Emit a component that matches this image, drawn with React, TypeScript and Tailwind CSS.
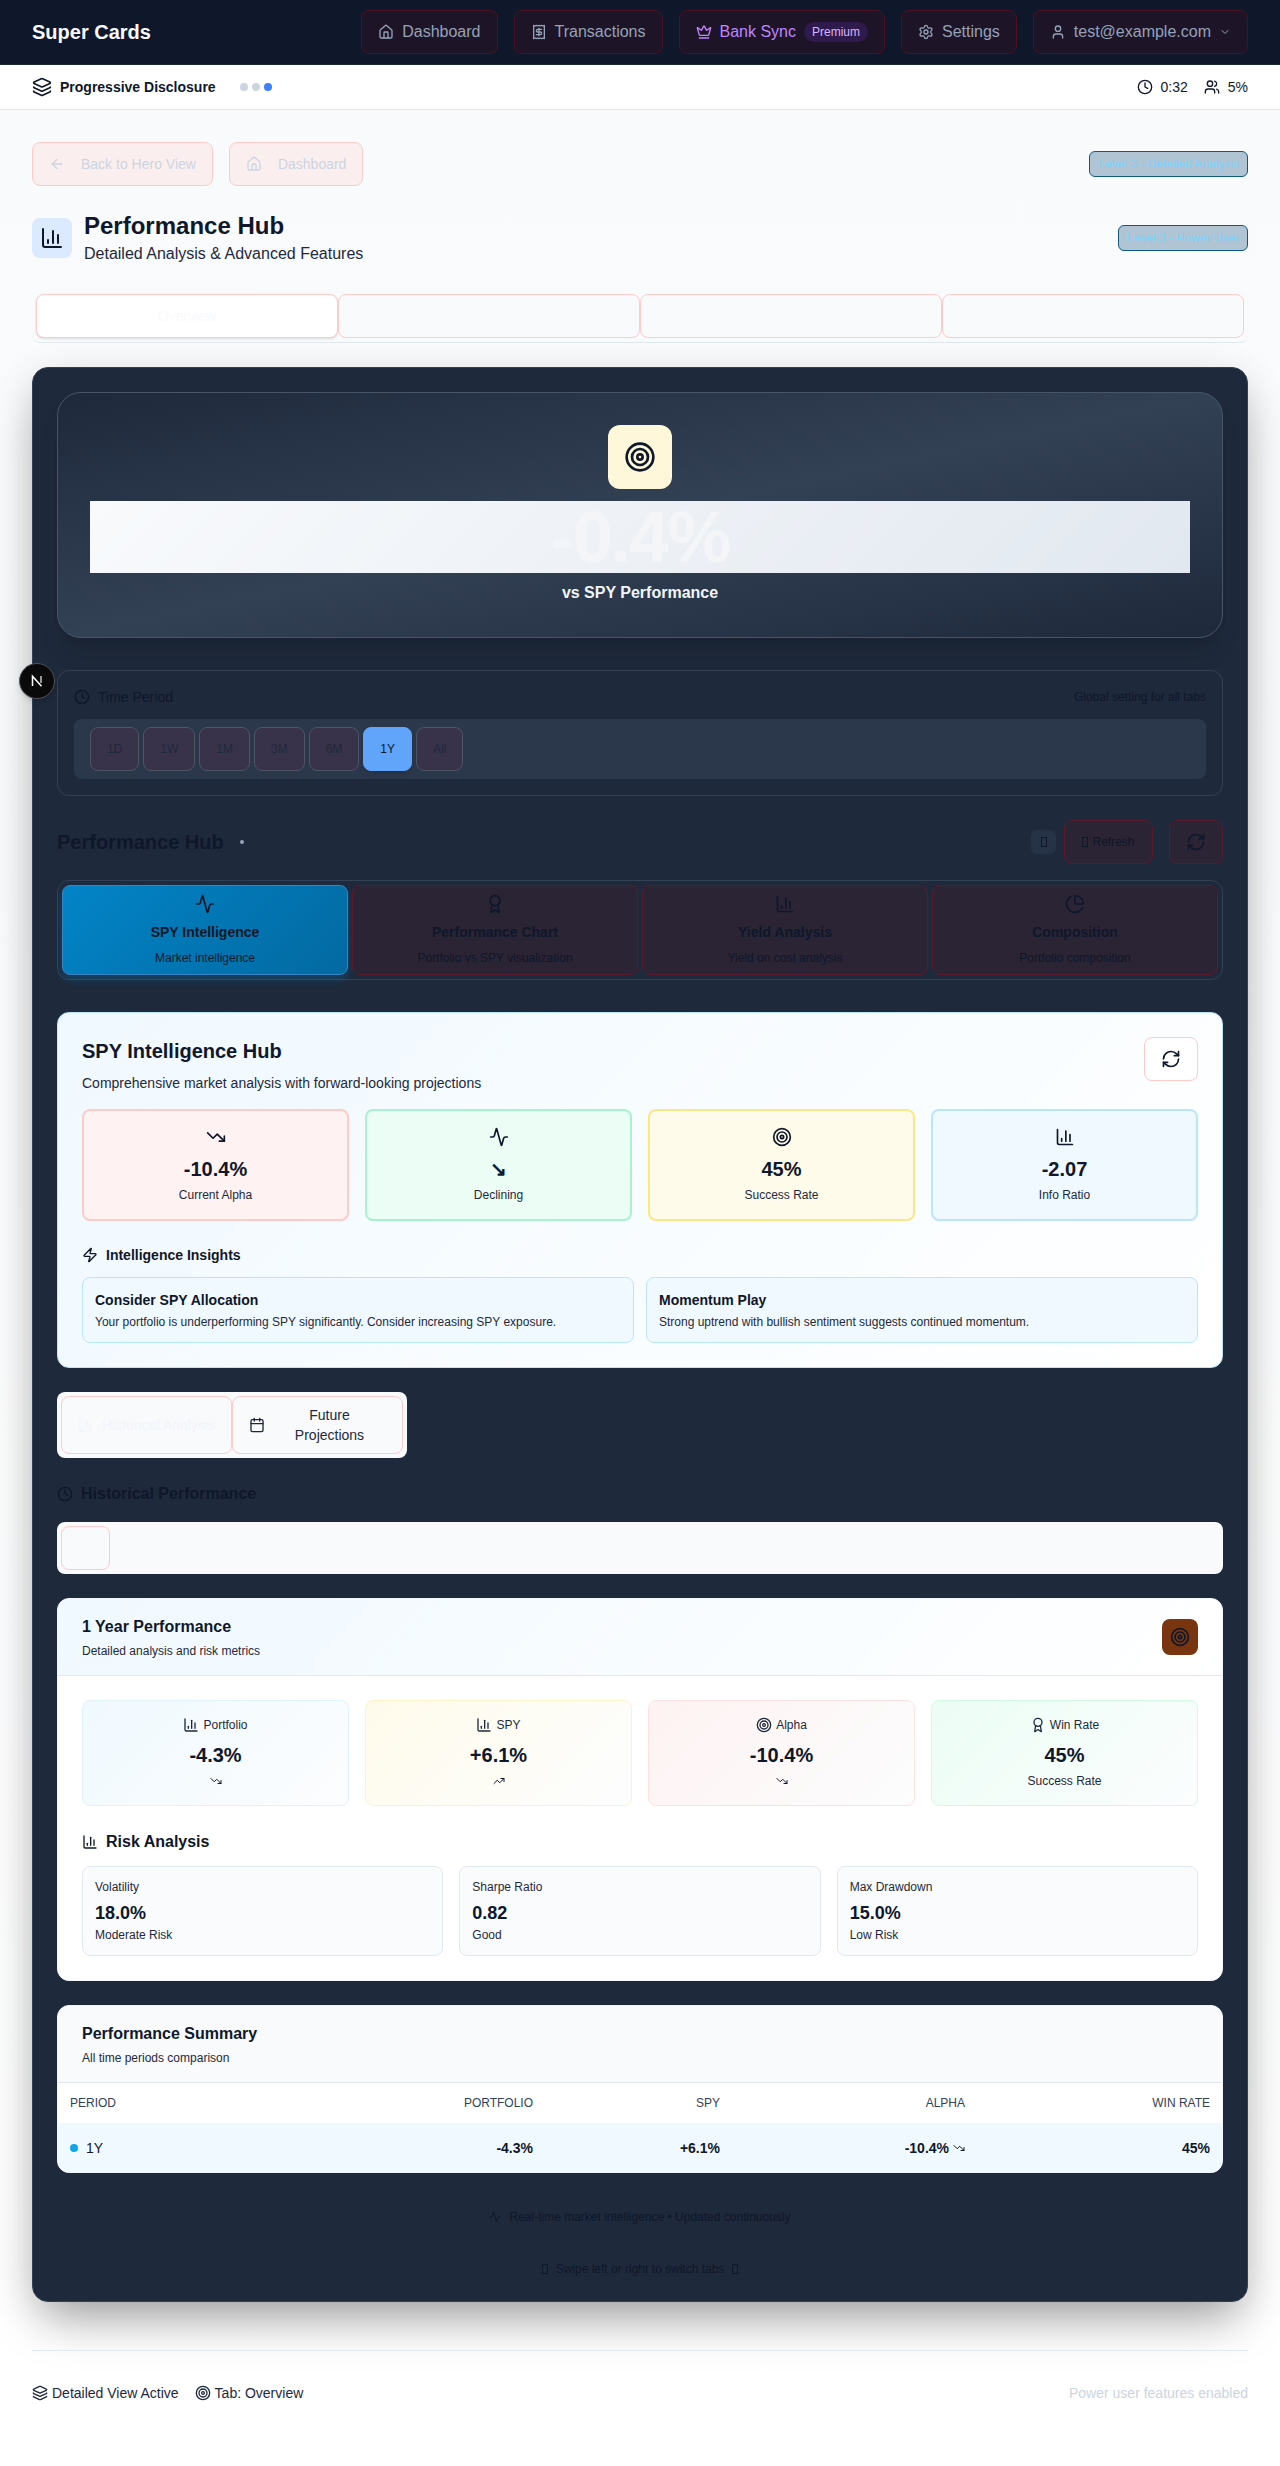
import React from "react";
import {
  Activity, ArrowLeft, Award, Calendar, ChartColumn, ChartPie, ChevronDown, Clock, Crown, House,
  Layers, Receipt, RefreshCw, Settings, Target, TrendingDown, TrendingUp, User, Users, Zap,
} from "lucide-react";

const navItems = [
  { label: "Dashboard", Icon: House },
  { label: "Transactions", Icon: Receipt },
];

function Tofu() {
  return <span className="inline-block w-[6px] h-[10px] border border-current" />;
}

function Nav() {
  return (
    <header className="h-[65px] bg-[#0f172a] border-b border-[#1e293b] px-8 flex items-center justify-between">
      <span className="text-xl font-bold text-[#f8fafc]">Super Cards</span>
      <nav className="flex items-center gap-4 text-base text-[#94a3b8]">
        {navItems.map(({ label, Icon }) => (
          <a key={label} className="h-11 px-4 flex items-center gap-2 rounded-lg border border-[#4c1023] bg-[#1e1427]">
            <Icon className="w-4 h-4" />
            {label}
          </a>
        ))}
        <a className="h-11 px-4 flex items-center gap-2 rounded-lg border border-[#4c1023] bg-[#1e1427] text-[#c084fc]">
          <Crown className="w-4 h-4" />
          Bank Sync
          <span className="h-5 px-2 flex items-center rounded-full bg-[#2e1a4d] text-xs text-[#d8b4fe]">Premium</span>
        </a>
        <a className="h-11 px-4 flex items-center gap-2 rounded-lg border border-[#4c1023] bg-[#1e1427]">
          <Settings className="w-4 h-4" />
          Settings
        </a>
        <a className="h-11 px-4 flex items-center gap-2 rounded-lg border border-[#4c1023] bg-[#1e1427]">
          <User className="w-4 h-4" />
          test@example.com
          <ChevronDown className="w-3 h-3" />
        </a>
      </nav>
    </header>
  );
}

function SubBar() {
  return (
    <div className="h-[45px] bg-white border-b border-[#e2e8f0] px-8 flex items-center justify-between text-[#0f172a]">
      <div className="flex items-center">
        <Layers className="w-5 h-5" />
        <span className="ml-2 text-sm font-semibold">Progressive Disclosure</span>
        <div className="ml-6 flex gap-1">
          <span className="w-2 h-2 rounded-full bg-[#cbd5e1]" />
          <span className="w-2 h-2 rounded-full bg-[#cbd5e1]" />
          <span className="w-2 h-2 rounded-full bg-[#3b82f6]" />
        </div>
      </div>
      <div className="flex items-center text-sm">
        <Clock className="w-4 h-4" />
        <span className="ml-2">0:32</span>
        <Users className="w-4 h-4 ml-4" />
        <span className="ml-2">5%</span>
      </div>
    </div>
  );
}

function Badge({ children }: { children: React.ReactNode }) {
  return (
    <span className="h-[26px] px-2 flex items-center rounded-md border border-[#0c5a85] bg-[#b0c4d4] text-xs text-[#7dd3fc]">
      {children}
    </span>
  );
}

function TopSection() {
  return (
    <>
      <div className="flex items-center justify-between">
        <div className="flex gap-4 text-sm text-[#cbd5e1]">
          <a className="h-11 px-4 flex items-center gap-4 rounded-lg border border-[#fecaca] bg-[#fbeeee]">
            <ArrowLeft className="w-4 h-4" />
            Back to Hero View
          </a>
          <a className="h-11 px-4 flex items-center gap-4 rounded-lg border border-[#fecaca] bg-[#fbeeee]">
            <House className="w-4 h-4" />
            Dashboard
          </a>
        </div>
        <Badge>Level 3 - Detailed Analysis</Badge>
      </div>
      <div className="mt-6 flex items-center justify-between">
        <div className="flex items-center gap-3">
          <div className="w-10 h-10 rounded-lg bg-[#dbeafe] flex items-center justify-center text-[#0f172a]">
            <ChartColumn className="w-6 h-6" />
          </div>
          <div>
            <h1 className="text-2xl font-bold text-[#0f172a]">Performance Hub</h1>
            <p className="text-base text-[#1e293b]">Detailed Analysis &amp; Advanced Features</p>
          </div>
        </div>
        <Badge>Level 3 - Power User</Badge>
      </div>
      <div className="mt-6 p-1 grid grid-cols-4 rounded-lg border-b border-[#e2e8f0] bg-[#f8fafc]">
        <button className="h-11 rounded-lg border border-[#fecaca] bg-white shadow-sm text-sm text-[#f8fafc]">Overview</button>
        <button className="h-11 rounded-lg border border-[#fecaca] bg-[#f8fafc] text-sm text-[#f8fafc]">Performance</button>
        <button className="h-11 rounded-lg border border-[#fecaca] bg-[#f8fafc] text-sm text-[#f8fafc]">Composition</button>
        <button className="h-11 rounded-lg border border-[#fecaca] bg-[#f8fafc] text-sm text-[#f8fafc]">Analysis</button>
      </div>
    </>
  );
}

function Hero() {
  return (
    <section className="rounded-3xl border border-[#475569] bg-gradient-to-br from-[#1e293b] via-[#334155] to-[#1e293b] shadow-xl p-8 flex flex-col items-center">
      <div className="w-16 h-16 rounded-xl bg-[#fef7d9] flex items-center justify-center text-[#0f172a]">
        <Target className="w-8 h-8" />
      </div>
      <div className="mt-3 w-full h-[72px] bg-[linear-gradient(135deg,#f8fafc,#e2e8f0)] text-center text-7xl font-bold tracking-tight text-[#f3f5f9]">
        -0.4%
      </div>
      <p className="mt-2 text-base font-semibold text-[#f1f5f9]">vs SPY Performance</p>
    </section>
  );
}

function TimePeriod() {
  const items = ["1D", "1W", "1M", "3M", "6M", "1Y", "All"];
  return (
    <section className="mt-8 rounded-xl border border-[#334155] bg-[#1e293b] p-4">
      <div className="h-5 flex items-center justify-between text-[#0f172a]">
        <span className="flex items-center gap-2 text-sm">
          <Clock className="w-4 h-4" />
          Time Period
        </span>
        <span className="text-xs">Global setting for all tabs</span>
      </div>
      <div className="mt-3 px-4 py-2 rounded-lg bg-[#2b384c] flex gap-1">
        {items.map((t) =>
          t === "1Y" ? (
            <button key={t} className="h-11 px-4 rounded-lg border border-[#60a5fa] bg-[#60a5fa] text-xs text-[#0f172a] shadow-md">{t}</button>
          ) : (
            <button key={t} className="h-11 px-4 rounded-lg border border-[#4b5563] bg-[#38324a] text-xs text-[#1e293b]">{t}</button>
          )
        )}
      </div>
    </section>
  );
}

function HubHeader() {
  return (
    <div className="mt-6 h-11 flex items-center justify-between text-[#0f172a]">
      <div className="flex items-center">
        <h2 className="text-xl font-bold">Performance Hub</h2>
        <span className="ml-4 w-1 h-1 rounded-full bg-[#94a3b8]" />
      </div>
      <div className="flex items-center">
        <span className="w-[25px] h-6 rounded-md bg-[#263346] flex items-center justify-center"><Tofu /></span>
        <button className="ml-2 h-11 w-[89px] rounded-lg border border-[#5a1a2e] bg-[#2a2435] text-xs flex items-center justify-center gap-1">
          <Tofu />
          Refresh
        </button>
        <button className="ml-4 h-11 w-[54px] rounded-lg border border-[#5a1a2e] bg-[#2a2435] flex items-center justify-center">
          <RefreshCw className="w-5 h-5" />
        </button>
      </div>
    </div>
  );
}

function HubTabs() {
  const tabs = [
    { title: "SPY Intelligence", sub: "Market intelligence", Icon: Activity, active: true },
    { title: "Performance Chart", sub: "Portfolio vs SPY visualization", Icon: Award },
    { title: "Yield Analysis", sub: "Yield on cost analysis", Icon: ChartColumn },
    { title: "Composition", sub: "Portfolio composition", Icon: ChartPie },
  ];
  return (
    <div className="mt-4 p-1 rounded-xl border border-[#334155] grid grid-cols-4 gap-1 text-[#0f172a]">
      {tabs.map(({ title, sub, Icon, active }) =>
        active ? (
          <button key={title} className="p-2 rounded-lg border border-[#3b82c4] bg-[linear-gradient(135deg,#0284c7,#0369a1)] shadow-[0_4px_8px_rgba(2,132,199,0.35)] flex flex-col items-center">
            <Icon className="w-5 h-5" />
            <span className="mt-2 text-sm font-semibold">{title}</span>
            <span className="mt-2 text-xs">{sub}</span>
          </button>
        ) : (
          <button key={title} className="p-2 rounded-lg border border-[#5a1a2e] bg-[#2a2435] flex flex-col items-center">
            <Icon className="w-5 h-5" />
            <span className="mt-2 text-sm font-semibold">{title}</span>
            <span className="mt-2 text-xs">{sub}</span>
          </button>
        )
      )}
    </div>
  );
}

function SpyCard() {
  return (
    <section className="mt-8 rounded-xl border border-[#bae6fd] bg-[linear-gradient(135deg,#f0f9ff,#ffffff)] p-6 text-[#0f172a]">
      <div className="flex items-start justify-between h-[56px]">
        <div>
          <h3 className="text-xl font-bold">SPY Intelligence Hub</h3>
          <p className="mt-2 text-sm text-[#1e293b]">Comprehensive market analysis with forward-looking projections</p>
        </div>
        <button className="w-[54px] h-11 rounded-lg border border-[#fecaca] bg-white flex items-center justify-center">
          <RefreshCw className="w-5 h-5" />
        </button>
      </div>
      <div className="mt-4 grid grid-cols-4 gap-4">
        <div className="h-[112px] rounded-lg border-2 border-[#fecaca] bg-[#fef2f2] p-4 flex flex-col items-center">
          <TrendingDown className="w-5 h-5" />
          <span className="mt-2 text-xl font-bold">-10.4%</span>
          <span className="mt-1 text-xs text-[#1e293b]">Current Alpha</span>
        </div>
        <div className="h-[112px] rounded-lg border-2 border-[#a7f3d0] bg-[#ecfdf5] p-4 flex flex-col items-center">
          <Activity className="w-5 h-5" />
          <span className="mt-2 text-xl font-bold">↘</span>
          <span className="mt-1 text-xs text-[#1e293b]">Declining</span>
        </div>
        <div className="h-[112px] rounded-lg border-2 border-[#fde68a] bg-[#fffbeb] p-4 flex flex-col items-center">
          <Target className="w-5 h-5" />
          <span className="mt-2 text-xl font-bold">45%</span>
          <span className="mt-1 text-xs text-[#1e293b]">Success Rate</span>
        </div>
        <div className="h-[112px] rounded-lg border-2 border-[#bae6fd] bg-[#f0f9ff] p-4 flex flex-col items-center">
          <ChartColumn className="w-5 h-5" />
          <span className="mt-2 text-xl font-bold">-2.07</span>
          <span className="mt-1 text-xs text-[#1e293b]">Info Ratio</span>
        </div>
      </div>
      <h4 className="mt-6 flex items-center gap-2 text-sm font-semibold">
        <Zap className="w-4 h-4" />
        Intelligence Insights
      </h4>
      <div className="mt-3 grid grid-cols-2 gap-3">
        <div className="rounded-lg border border-[#bae6fd] bg-[#f0f9ff] p-3">
          <p className="text-sm font-semibold">Consider SPY Allocation</p>
          <p className="mt-1 text-xs text-[#1e293b]">Your portfolio is underperforming SPY significantly. Consider increasing SPY exposure.</p>
        </div>
        <div className="rounded-lg border border-[#bae6fd] bg-[#f0f9ff] p-3">
          <p className="text-sm font-semibold">Momentum Play</p>
          <p className="mt-1 text-xs text-[#1e293b]">Strong uptrend with bullish sentiment suggests continued momentum.</p>
        </div>
      </div>
    </section>
  );
}

function Historical() {
  return (
    <>
      <div className="mt-6 w-[350px] p-1 rounded-lg bg-[#f8fafc] flex text-sm">
        <button className="w-[171px] py-2 px-4 rounded-lg border border-[#fecaca] flex items-center gap-2 text-[#f1f5f9]">
          <ChartColumn className="w-4 h-4 shrink-0" />
          <span className="whitespace-nowrap">Historical Analysis</span>
        </button>
        <button className="w-[171px] py-2 px-4 rounded-lg border border-[#fecaca] flex items-center gap-2 text-[#1e293b]">
          <Calendar className="w-4 h-4 shrink-0" />
          <span className="flex-1 text-center">Future<br />Projections</span>
        </button>
      </div>
      <h3 className="mt-6 flex items-center gap-2 text-base font-semibold text-[#0f172a]">
        <Clock className="w-4 h-4" />
        Historical Performance
      </h3>
      <div className="mt-4 p-1 rounded-lg bg-[#f8fafc]">
        <div className="w-[49px] h-11 rounded-lg border border-[#fecaca]" />
      </div>
    </>
  );
}

function YearCard() {
  const stats = [
    { l: "Portfolio", v: "-4.3%", Icon: ChartColumn, Trend: TrendingDown, c: "border-[#e0f2fe] bg-[linear-gradient(135deg,#f0f9ff,#fcfdfe)]" },
    { l: "SPY", v: "+6.1%", Icon: ChartColumn, Trend: TrendingUp, c: "border-[#fef3c7] bg-[linear-gradient(135deg,#fffbeb,#fcfdfe)]" },
    { l: "Alpha", v: "-10.4%", Icon: Target, Trend: TrendingDown, c: "border-[#fee2e2] bg-[linear-gradient(135deg,#fef2f2,#fcfdfe)]" },
    { l: "Win Rate", v: "45%", Icon: Award, c: "border-[#d1fae5] bg-[linear-gradient(135deg,#ecfdf5,#fcfdfe)]" },
  ];
  const risks = [
    ["Volatility", "18.0%", "Moderate Risk"],
    ["Sharpe Ratio", "0.82", "Good"],
    ["Max Drawdown", "15.0%", "Low Risk"],
  ];
  return (
    <section className="mt-6 rounded-xl border border-[#f1f5f9] bg-white overflow-hidden text-[#0f172a]">
      <div className="px-6 py-4 flex items-center justify-between border-b border-[#e2e8f0] bg-[linear-gradient(135deg,#f0f9ff,#ffffff)]">
        <div>
          <h3 className="text-base font-semibold">1 Year Performance</h3>
          <p className="mt-1 text-xs text-[#1e293b]">Detailed analysis and risk metrics</p>
        </div>
        <div className="w-9 h-9 rounded-lg bg-[#78350f] flex items-center justify-center text-[#0f172a]">
          <Target className="w-5 h-5" />
        </div>
      </div>
      <div className="p-6">
        <div className="grid grid-cols-4 gap-4">
          {stats.map(({ l, v, Icon, Trend, c }) => (
            <div key={l} className={`h-[106px] rounded-lg border p-4 flex flex-col items-center ${c}`}>
              <span className="flex items-center gap-1 text-xs text-[#1e293b]">
                <Icon className="w-4 h-4" />
                {l}
              </span>
              <span className="mt-2 text-xl font-bold">{v}</span>
              {Trend ? (
                <span className="mt-1 h-4 flex items-center"><Trend className="w-3 h-3" /></span>
              ) : (
                <span className="mt-1 text-xs text-[#1e293b]">Success Rate</span>
              )}
            </div>
          ))}
        </div>
        <h4 className="mt-6 flex items-center gap-2 text-base font-semibold">
          <ChartColumn className="w-4 h-4" />
          Risk Analysis
        </h4>
        <div className="mt-3 grid grid-cols-3 gap-4">
          {risks.map(([a, b, c]) => (
            <div key={a} className="rounded-lg border border-[#e2e8f0] bg-[#fafbfd] p-3">
              <p className="text-xs text-[#1e293b]">{a}</p>
              <p className="mt-1 text-lg font-bold">{b}</p>
              <p className="text-xs text-[#1e293b]">{c}</p>
            </div>
          ))}
        </div>
      </div>
    </section>
  );
}

function Summary() {
  return (
    <section className="mt-6 rounded-xl border border-[#f1f5f9] bg-white overflow-hidden text-[#0f172a]">
      <div className="px-6 py-4 border-b border-[#e2e8f0] bg-[#f8fafc]">
        <h3 className="text-base font-semibold">Performance Summary</h3>
        <p className="mt-1 text-xs text-[#1e293b]">All time periods comparison</p>
      </div>
      <table className="w-full table-fixed">
        <thead>
          <tr className="text-xs uppercase text-[#334155]">
            <th className="w-[300px] h-10 px-3 font-normal text-left">Period</th>
            <th className="w-[187px] px-3 font-normal text-right">Portfolio</th>
            <th className="w-[187px] px-3 font-normal text-right">SPY</th>
            <th className="w-[245px] px-3 font-normal text-right">Alpha</th>
            <th className="px-3 font-normal text-right">Win Rate</th>
          </tr>
        </thead>
        <tbody className="text-sm bg-[#f0f9ff]">
          <tr>
            <td className="h-[49px] px-3">
              <span className="flex items-center gap-2">
                <span className="w-2 h-2 rounded-full bg-[#0ea5e9]" />
                1Y
              </span>
            </td>
            <td className="px-3 text-right font-semibold">-4.3%</td>
            <td className="px-3 text-right font-semibold">+6.1%</td>
            <td className="px-3 text-right font-semibold">
              <span className="inline-flex items-center gap-1">-10.4% <TrendingDown className="w-3 h-3" /></span>
            </td>
            <td className="px-3 text-right font-semibold">45%</td>
          </tr>
        </tbody>
      </table>
    </section>
  );
}

export default function App() {
  return (
    <div className="relative min-h-screen overflow-hidden bg-[linear-gradient(180deg,#f8fafc,#ffffff)] font-['Liberation_Sans',Arial,sans-serif]">
      <Nav />
      <SubBar />
      <main className="px-8 pt-8">
        <TopSection />
        <div className="mt-6 rounded-2xl border border-[#334155] bg-[#1e293b] p-6 shadow-[0_25px_50px_-12px_rgba(0,0,0,0.35),0_10px_40px_rgba(0,0,0,0.1)]">
          <Hero />
          <TimePeriod />
          <HubHeader />
          <HubTabs />
          <SpyCard />
          <Historical />
          <YearCard />
          <Summary />
          <p className="mt-9 flex items-center justify-center gap-2 text-xs text-[#0f172a]">
            <Activity className="w-3 h-3" />
            Real-time market intelligence • Updated continuously
          </p>
          <p className="mt-9 flex items-center justify-center gap-2 text-xs text-[#0f172a]">
            <Tofu />
            Swipe left or right to switch tabs
            <Tofu />
          </p>
        </div>
        <footer className="mt-12 pt-8 border-t border-[#e2e8f0] flex items-center justify-between text-sm text-[#1e293b]">
          <div className="flex items-center">
            <Layers className="w-4 h-4" />
            <span className="ml-1">Detailed View Active</span>
            <Target className="w-4 h-4 ml-4" />
            <span className="ml-1">Tab: Overview</span>
          </div>
          <span className="text-[#cbd5e1]">Power user features enabled</span>
        </footer>
      </main>
      <div className="absolute left-[19px] top-[663px] w-9 h-9 rounded-full bg-[#0a0a0a] border border-[#52525b] flex items-center justify-center shadow-md">
        <svg viewBox="0 0 18 18" className="w-[18px] h-[18px]" fill="none">
          <path d="M4.5 14V4.2l9 10" stroke="#ffffff" strokeWidth="1.5" />
          <path d="M13 4v7" stroke="#d4d4d8" strokeWidth="1.4" />
        </svg>
      </div>
    </div>
  );
}
